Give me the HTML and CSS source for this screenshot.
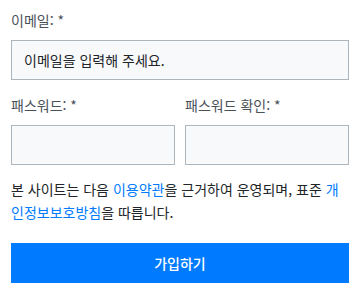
FILE: index.html
```html
<!DOCTYPE html>
<html lang="ko">
<head>
  <meta charset="UTF-8" />
  <meta name="viewport" content="width=device-width, initial-scale=1" />
  <title>회원가입</title>
  <link rel="stylesheet" href="styles.css">
</head>
<body>
  <form class="signup">
    <div class="field">
      <label for="email">이메일: *</label>
      <input type="email" id="email" placeholder="이메일을 입력해 주세요." />
    </div>

    <div class="row">
      <div class="field">
        <label for="pw">패스워드: *</label>
        <input type="password" id="pw" />
      </div>
      <div class="field">
        <label for="pw2">패스워드 확인: *</label>
        <input type="password" id="pw2" />
      </div>
    </div>

    <p class="terms">본 사이트는 다음 <a href="#">이용약관</a>을 근거하여 운영되며, 표준 <a href="#">개인정보보호방침</a>을 따릅니다.</p>

    <button type="submit">가입하기</button>
  </form>
</body>
</html>
```

FILE: styles.css
```css
body {
  margin: 0;
  padding: 10px 4px 0 11px;
  font-family: 'Noto Sans CJK KR', 'Noto Sans', sans-serif;
  font-size: 14px;
  color: #212529;
  background: #fff;
}
.signup {
  width: 338px;
}
.field {
  display: flex;
  flex-direction: column;
  min-width: 0;
  margin-bottom: 15px;
}
.field label {
  line-height: 21px;
  color: #495057;
  margin-bottom: 9px;
}
.field input {
  box-sizing: border-box;
  width: 100%;
  min-width: 0;
  height: 40px;
  padding: 0 12px;
  border: 1px solid #adb5bd;
  border-radius: 0;
  background: #f8f9fa;
  font-family: inherit;
  font-size: 14px;
  color: #212529;
  outline: none;
}
.field input::placeholder {
  color: #212529;
  opacity: 1;
}
.row {
  display: grid;
  grid-template-columns: minmax(0, 1fr) minmax(0, 1fr);
  gap: 10px;
}
.row .field {
  margin-bottom: 13px;
}
.terms {
  margin: 0 0 19px 0;
  line-height: 23px;
}
.terms a {
  color: #007bff;
  text-decoration: none;
}
button[type="submit"] {
  display: block;
  width: 100%;
  height: 40px;
  border: none;
  background: #007bff;
  color: #fff;
  font-family: inherit;
  font-size: 14px;
  font-weight: 500;
  cursor: pointer;
}
```
